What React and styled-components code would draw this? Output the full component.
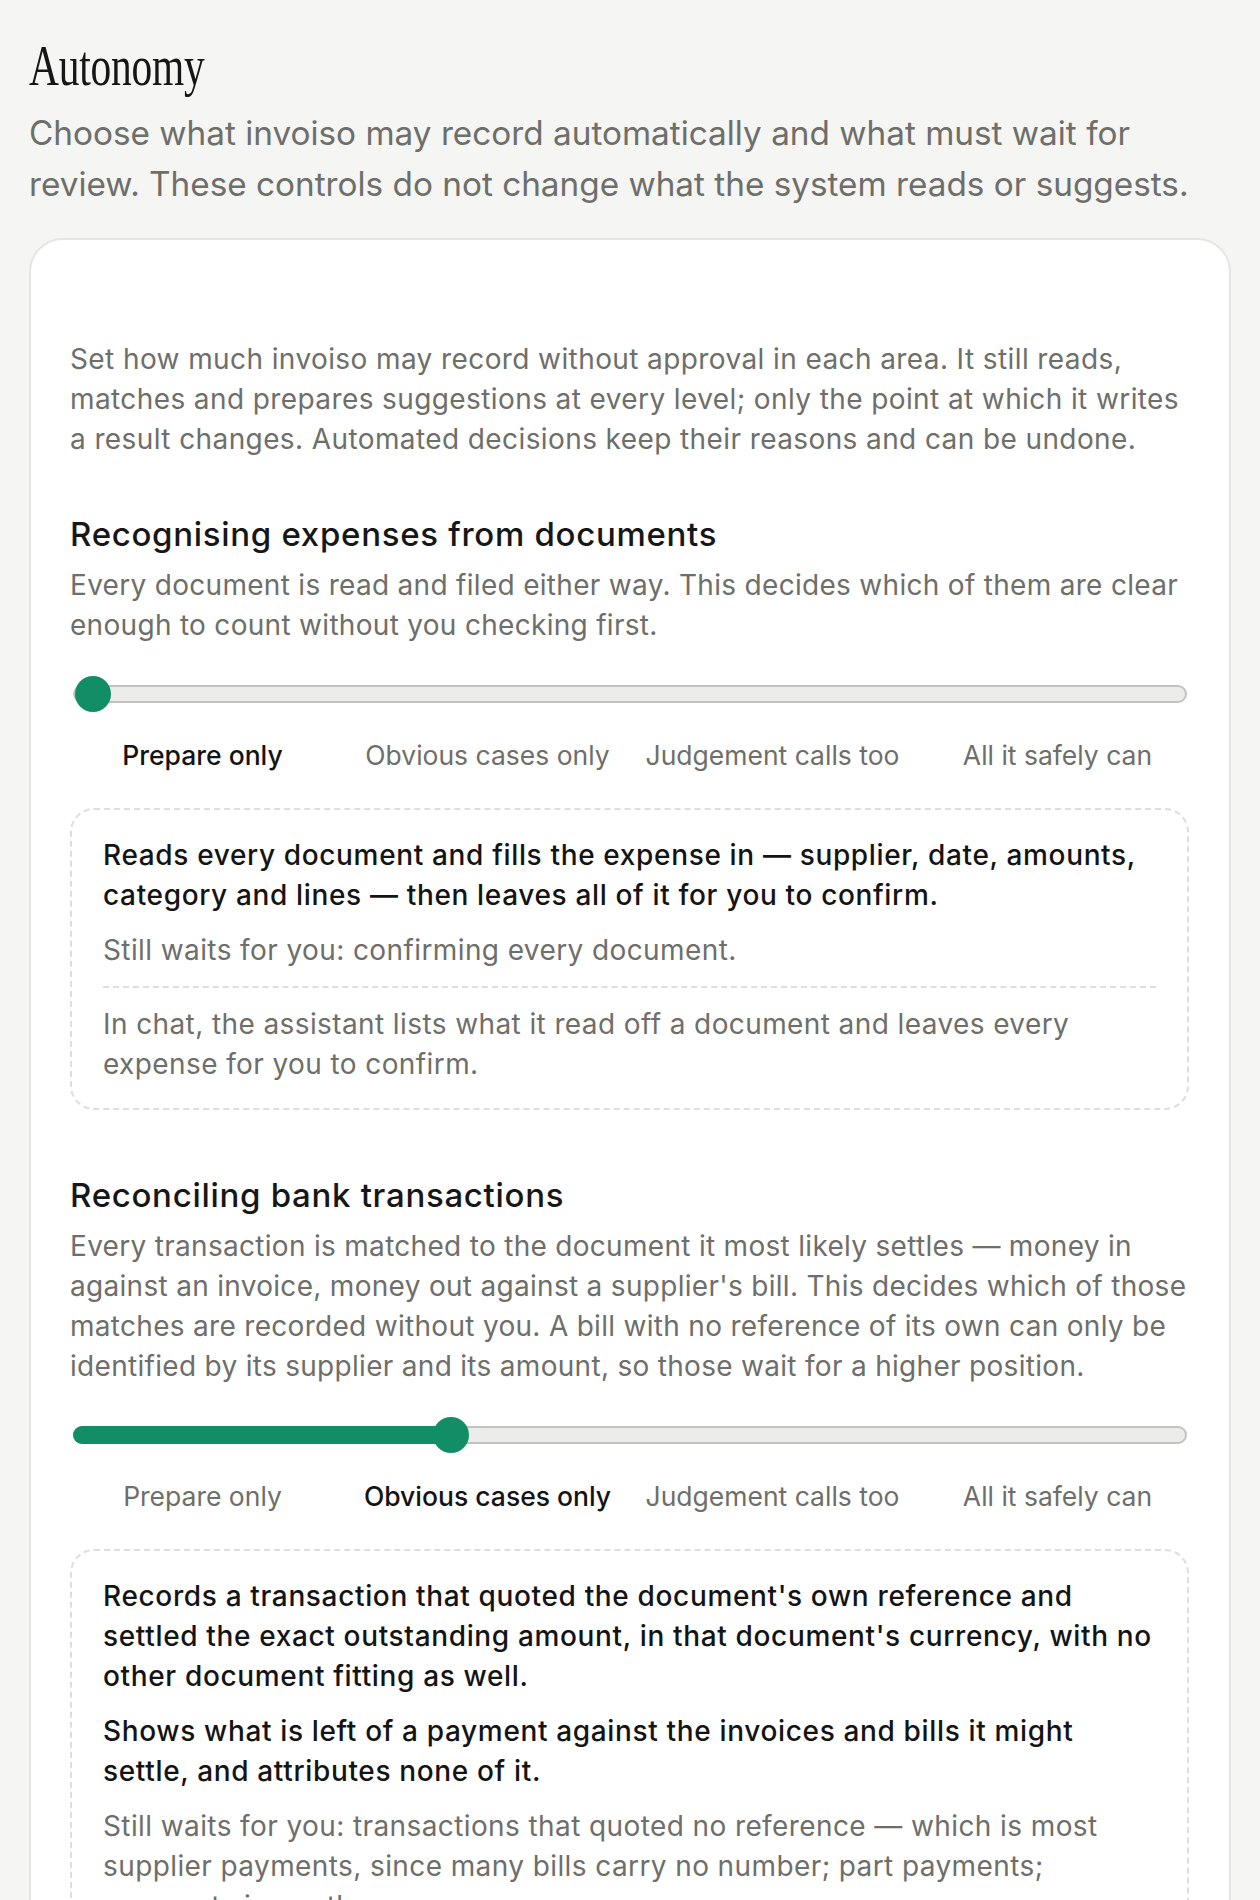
import React from "react";
import styled, { createGlobalStyle } from "styled-components";

const GlobalStyle = createGlobalStyle`
  body {
    margin: 0;
    background: #f5f5f3;
    font-family: Inter, "Liberation Sans", sans-serif;
    -webkit-font-smoothing: antialiased;
  }
`;

const Page = styled.div`
  padding: 34px 29px 80px;
`;

const Title = styled.h1`
  margin: 0;
  display: inline-block;
  font-family: "Liberation Serif", serif;
  font-weight: 400;
  font-size: 56px;
  line-height: 64px;
  letter-spacing: -0.3px;
  color: #161616;
  transform: scaleX(0.74);
  transform-origin: left center;
`;

const Lead = styled.p`
  margin: 10px 0 0;
  font-size: 33.3px;
  line-height: 51px;
  color: #6e6e6a;
`;

const Card = styled.div`
  margin-top: 28px;
  background: #fff;
  border: 2px solid #e5e5e2;
  border-radius: 34px;
  padding: 99px 38px 60px 39px;
`;

const Intro = styled.p`
  margin: 0;
  font-size: 28px;
  line-height: 40px;
  letter-spacing: 0.4px;
  color: #6e6e6a;
`;

const Section = styled.section`
  margin-top: ${({ $first }) => ($first ? "55px" : "65px")};
`;

const Heading = styled.h2`
  margin: 0;
  font-size: 33px;
  line-height: 40px;
  letter-spacing: 0.7px;
  font-weight: 500;
  color: #171717;
`;

const Desc = styled.p`
  margin: 11px 0 0;
  font-size: 28px;
  line-height: 40px;
  letter-spacing: 0.3px;
  color: #6e6e6a;
`;

const SliderRow = styled.div`
  margin: 31px 4px 0 3px;
  height: 36px;
  display: flex;
  align-items: center;
`;

const Track = styled.div`
  position: relative;
  flex: 1;
  height: 14px;
  border: 2px solid #c2c2c0;
  border-radius: 9px;
  background: #ececeb;
`;

const Fill = styled.div`
  position: absolute;
  left: -2px;
  top: -2px;
  height: 18px;
  border-radius: 9px;
  background: #128e66;
`;

const Thumb = styled.div`
  position: absolute;
  top: -11px;
  width: 36px;
  height: 36px;
  margin-left: -2px;
  border-radius: 50%;
  background: #128e66;
`;

const Labels = styled.div`
  margin: 25px 4px 0 3px;
  display: grid;
  grid-template-columns: repeat(4, 1fr);
  column-gap: 26px;
`;

const Label = styled.span`
  text-align: center;
  font-size: 26.5px;
  line-height: 36px;
  white-space: nowrap;
  color: ${({ $active }) => ($active ? "#141414" : "#6e6e6a")};
  font-weight: ${({ $active }) => ($active ? 500 : 400)};
`;

const Box = styled.div`
  margin: 35px 2px 0 0;
  border: 2px dashed #dededc;
  border-radius: 24px;
  padding: 25px 31px 24px;
  display: flex;
  flex-direction: column;
  gap: 15px;
`;

const Line = styled.p`
  margin: 0;
  font-size: 28px;
  line-height: 40px;
  letter-spacing: ${({ $strong }) => ($strong ? "0.65px" : "0.4px")};
  color: ${({ $strong }) => ($strong ? "#141414" : "#6e6e6a")};
  font-weight: ${({ $strong }) => ($strong ? 500 : 400)};
`;

const Chat = styled.p`
  margin: 1px 0 0;
  padding-top: 16px;
  border-top: 2px dashed #dededc;
  font-size: 28px;
  line-height: 40px;
  letter-spacing: 0.4px;
  color: #6e6e6a;
`;

const levels = [
  "Prepare only",
  "Obvious cases only",
  "Judgement calls too",
  "All it safely can",
];

const areas = [
  {
    title: "Recognising expenses from documents",
    desc: "Every document is read and filed either way. This decides which of them are clear enough to count without you checking first.",
    level: 0,
    does: [
      "Reads every document and fills the expense in — supplier, date, amounts, category and lines — then leaves all of it for you to confirm.",
    ],
    waits: "Still waits for you: confirming every document.",
    chat: "In chat, the assistant lists what it read off a document and leaves every expense for you to confirm.",
  },
  {
    title: "Reconciling bank transactions",
    desc: "Every transaction is matched to the document it most likely settles — money in against an invoice, money out against a supplier's bill. This decides which of those matches are recorded without you. A bill with no reference of its own can only be identified by its supplier and its amount, so those wait for a higher position.",
    level: 1,
    does: [
      "Records a transaction that quoted the document's own reference and settled the exact outstanding amount, in that document's currency, with no other document fitting as well.",
      "Shows what is left of a payment against the invoices and bills it might settle, and attributes none of it.",
    ],
    waits: "Still waits for you: transactions that quoted no reference — which is most supplier payments, since many bills carry no number; part payments; payments in another currency.",
    chat: "In chat, the assistant proposes matches for what is left and records none of them until you agree.",
  },
];

const Slider = ({ level }) => {
  const share = level / (levels.length - 1);
  return (
    <SliderRow>
      <Track>
        {level > 0 && (
          <Fill style={{ width: `calc((100% - 36px) * ${share} + 30px)` }} />
        )}
        <Thumb style={{ left: `calc((100% - 36px) * ${share} + 2px)` }} />
      </Track>
    </SliderRow>
  );
};

const Area = ({ area, first }) => (
  <Section $first={first}>
    <Heading>{area.title}</Heading>
    <Desc>{area.desc}</Desc>
    <Slider level={area.level} />
    <Labels>
      {levels.map((name, i) => (
        <Label key={name} $active={i === area.level}>
          {name}
        </Label>
      ))}
    </Labels>
    <Box>
      {area.does.map((text) => (
        <Line key={text} $strong>
          {text}
        </Line>
      ))}
      <Line>{area.waits}</Line>
      <Chat>{area.chat}</Chat>
    </Box>
  </Section>
);

export default function App() {
  return (
    <>
      <GlobalStyle />
      <Page>
        <Title>Autonomy</Title>
        <Lead>
          Choose what invoiso may record automatically and what must wait for
          review. These controls do not change what the system reads or
          suggests.
        </Lead>
        <Card>
          <Intro>
            Set how much invoiso may record without approval in each area. It
            still reads, matches and prepares suggestions at every level; only
            the point at which it writes a result changes. Automated decisions
            keep their reasons and can be undone.
          </Intro>
          {areas.map((area, i) => (
            <Area key={area.title} area={area} first={i === 0} />
          ))}
        </Card>
      </Page>
    </>
  );
}
